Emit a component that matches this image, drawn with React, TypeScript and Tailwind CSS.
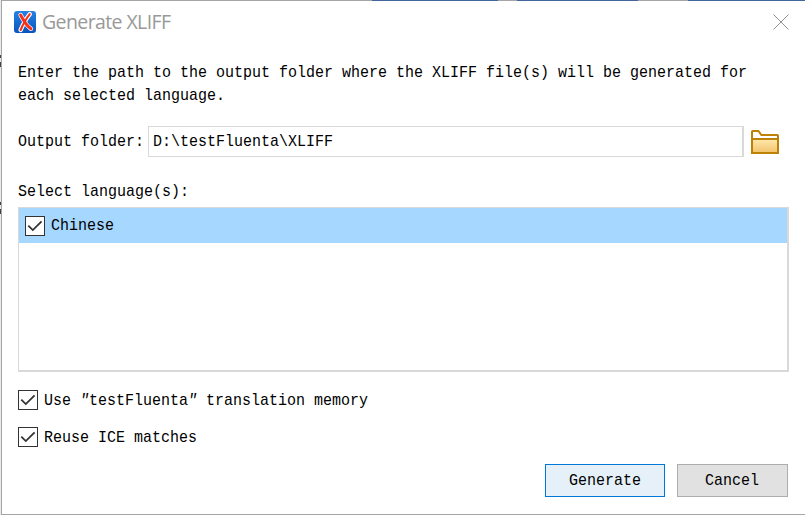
import React from "react";

const mono =
  "block origin-left translate-y-px scale-y-[1.12] whitespace-pre font-['Liberation_Mono',monospace] text-[15px] leading-[23px] text-black";

function Label({ children }: { children: React.ReactNode }) {
  return <span className={mono}>{children}</span>;
}

function CheckBox() {
  return (
    <svg className="block size-5 shrink-0" viewBox="0 0 20 20" fill="none">
      <rect x="0.5" y="0.5" width="19" height="19" fill="#fff" stroke="#333" />
      <path d="M3.3 9.6 L7.8 14.1 L16.6 5.3" stroke="#333" strokeWidth="1.8" />
    </svg>
  );
}

function AppIcon() {
  return (
    <svg className="block size-[22px]" viewBox="0 0 22 22" fill="none">
      <defs>
        <linearGradient id="app-blue" x1="0" y1="0" x2="0" y2="1">
          <stop offset="0" stopColor="#2583e4" />
          <stop offset="1" stopColor="#0754bd" />
        </linearGradient>
      </defs>
      <rect width="22" height="22" rx="3" fill="url(#app-blue)" />
      <g strokeLinecap="round" strokeLinejoin="round">
        <path d="M6.6 4 C9 8.5 12 14.5 17 17.8 M15.8 3.2 C11.5 8.5 9 13.5 6.6 19" stroke="#fff" strokeWidth="4.4" />
        <path d="M6.6 4 C9 8.5 12 14.5 17 17.8" stroke="#f8301a" strokeWidth="3" />
        <path d="M15.8 3.2 C11.5 8.5 9 13.5 6.6 19" stroke="#f8301a" strokeWidth="2.1" />
      </g>
    </svg>
  );
}

function FolderIcon() {
  return (
    <svg className="block h-6 w-7" viewBox="0 0 28 24" fill="none">
      <defs>
        <linearGradient id="folder-fill" x1="0" y1="0" x2="0" y2="1">
          <stop offset="0" stopColor="#ffe9ad" />
          <stop offset="1" stopColor="#f1c26b" />
        </linearGradient>
      </defs>
      <path d="M1 9 V1.8 Q1 1 1.8 1 H7.4 L10.4 5 H26.2 Q27 5 27 5.8 V9" fill="#fff" stroke="#bd8105" strokeWidth="2" />
      <rect x="1" y="9" width="26" height="14" fill="url(#folder-fill)" stroke="#bd8105" strokeWidth="2" />
    </svg>
  );
}

export default function App() {
  return (
    <div className="flex h-[515px] w-[805px] overflow-hidden bg-white">
      <div className="flex w-px shrink-0 flex-col bg-[#e9e9e9]">
        <div className="mt-[55px] h-[3px] bg-[#444]" />
        <div className="mt-1 h-[5px] bg-[#4b4038]" />
        <div className="mt-[135px] h-[3px] bg-[#444]" />
        <div className="mt-1 h-[5px] bg-[#4b4038]" />
      </div>
      <div className="flex h-[515px] w-[804px] flex-col border-b border-l border-[#a5a5a5]">
        <div className="flex h-px shrink-0">
          <div className="w-[370px] bg-[#a5a5a5]" />
          <div className="w-[126px] bg-[#42669b]" />
          <div className="w-[19px] bg-[#a5a5a5]" />
          <div className="w-[121px] bg-[#42669b]" />
          <div className="w-[50px] bg-[#a5a5a5]" />
          <div className="flex-1 bg-[#42669b]" />
        </div>

        <header className="flex h-[42px] shrink-0 items-center pr-4 pl-3">
          <AppIcon />
          <h1 className="ml-[6px] font-['Open_Sans',sans-serif] text-[19.5px] leading-[22px] tracking-[-0.6px] text-[#999]">
            Generate XLIFF
          </h1>
          <svg className="ml-auto block size-4" viewBox="0 0 16 16" fill="none">
            <path d="M0.5 0.5 L15.5 15.5 M15.5 0.5 L0.5 15.5" stroke="#919191" />
          </svg>
        </header>

        <main className="flex flex-1 flex-col pr-4 pl-4">
          <div className="mt-[18px]">
            <Label>Enter the path to the output folder where the XLIFF file(s) will be generated for</Label>
            <Label>each selected language.</Label>
          </div>

          <div className="mt-[19px] flex h-[31px] items-center">
            <div className="w-[130px]">
              <Label>Output folder:</Label>
            </div>
            <div className="flex h-[31px] w-[596px] items-center border border-r-2 border-[#d9d9d9] bg-white pl-1">
              <Label>D:\testFluenta\XLIFF</Label>
            </div>
            <div className="ml-[7px]">
              <FolderIcon />
            </div>
          </div>

          <div className="mt-[23px]">
            <Label>Select language(s):</Label>
          </div>
          <div className="mt-1 h-[165px] w-[771px] border border-r-2 border-b-2 border-[#d9d9d9] bg-white">
            <div className="flex h-[35px] items-center gap-[6px] bg-[#a6d7ff] pl-[6px]">
              <CheckBox />
              <Label>Chinese</Label>
            </div>
          </div>

          <div className="mt-[18px] flex h-5 items-center gap-[6px]">
            <CheckBox />
            <Label>
              Use <i>"</i>testFluenta<i>"</i> translation memory
            </Label>
          </div>
          <div className="mt-[17px] flex h-5 items-center gap-[6px]">
            <CheckBox />
            <Label>Reuse ICE matches</Label>
          </div>

          <div className="mt-[17px] flex justify-end gap-3 pr-px">
            <button className="flex h-[33px] w-[120px] items-center justify-center border border-[#0078d7] bg-[#e5f0f9]">
              <Label>Generate</Label>
            </button>
            <button className="flex h-[33px] w-[111px] items-center justify-center border border-[#adadad] bg-[#e1e1e1] pr-px">
              <Label>Cancel</Label>
            </button>
          </div>
        </main>
      </div>
    </div>
  );
}
